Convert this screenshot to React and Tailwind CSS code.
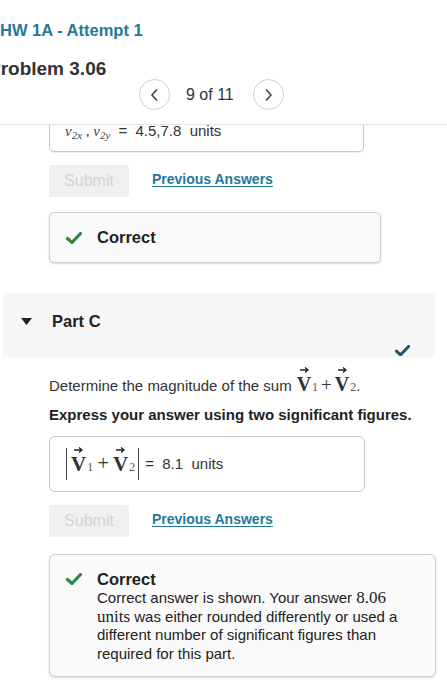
import React from "react";

const sans = { fontFamily: '"Liberation Sans", Arial, sans-serif' };
const serif = { fontFamily: '"Liberation Serif", "DejaVu Serif", serif' };

function Vec({ sub, size = "text-[20px]" }) {
  return (
    <span className="inline-flex items-baseline" style={serif}>
      <span className={`relative font-bold ${size} leading-none`}>
        V
        <svg className="absolute left-[3px] -top-[7px]" width="9" height="6" viewBox="0 0 9 6">
          <path d="M0 3 H7.5 M5 0.6 L8 3 L5 5.4" stroke="#222" strokeWidth="1.3" fill="none" />
        </svg>
      </span>
      <span className="text-[12px] leading-none ml-[1px] text-[#555]">{sub}</span>
    </span>
  );
}

function Check({ color = "#2c8a43", w = 16 }) {
  return (
    <svg width={w} height={w * 0.75} viewBox="0 0 16 12">
      <path d="M1.5 6.5 L6 10.5 L14.5 1.5" stroke={color} strokeWidth="3.2" fill="none" strokeLinecap="round" strokeLinejoin="round" />
    </svg>
  );
}

function SubmitRow() {
  return (
    <div className="flex items-center gap-[23px]">
      <div className="w-[80px] h-[32px] bg-[#f0f0f0] rounded-[2px] flex items-center justify-center text-[16px] text-[#d4d4d4]">
        Submit
      </div>
      <a className="text-[14px] font-bold text-[#23799a] underline underline-offset-2 -mt-[3px]">Previous Answers</a>
    </div>
  );
}

export default function App() {
  return (
    <div className="w-[447px] h-[700px] bg-white overflow-hidden text-[#333]" style={sans}>
      {/* header */}
      <div className="h-[125px] border-b border-[#e4e4e4] flex flex-col">
        <div className="pt-[20px] text-[16.5px] font-bold text-[#23799a] leading-[20px]">HW 1A - Attempt 1</div>
        <div className="mt-[18px] -ml-[12px] text-[19px] font-bold text-[#333] leading-[22px]">Problem 3.06</div>
        <div className="mt-[-1px] flex items-center pl-[139px]">
          <div className="w-[31px] h-[31px] rounded-full border border-[#d0d0d0] flex items-center justify-center">
            <svg width="9" height="14" viewBox="0 0 9 14"><path d="M7 1.5 L2 7 L7 12.5" stroke="#444" strokeWidth="1.6" fill="none" /></svg>
          </div>
          <div className="ml-[16px] mr-[19px] text-[16px] text-[#333]">9 of 11</div>
          <div className="w-[31px] h-[31px] rounded-full border border-[#d0d0d0] flex items-center justify-center">
            <svg width="9" height="14" viewBox="0 0 9 14"><path d="M2 1.5 L7 7 L2 12.5" stroke="#444" strokeWidth="1.6" fill="none" /></svg>
          </div>
        </div>
      </div>

      {/* previous answer box, scrolled under the header */}
      <div className="pl-[49px]">
        <div className="h-[28px] overflow-hidden">
          <div className="-mt-[15px] w-[315px] h-[42px] border border-[#c8c8c8] rounded-[5px] shadow-[0_1px_1px_rgba(0,0,0,0.08)] flex items-center pl-[15px] text-[15px]">
            <span className="italic text-[#444]" style={serif}>
              v<sub className="text-[11px]">2x</sub> , v<sub className="text-[11px]">2y</sub>
            </span>
            <span className="ml-[8px]">=&nbsp; 4.5,7.8 &nbsp;units</span>
          </div>
        </div>

        <div className="mt-[12px]">
          <SubmitRow />
        </div>

        <div className="mt-[15px] w-[332px] h-[51px] border border-[#cfcfcf] rounded-[5px] bg-[#fafafa] shadow-[0_1px_2px_rgba(0,0,0,0.15)] flex items-center pl-[16px]">
          <Check />
          <span className="ml-[15px] text-[16.5px] font-bold text-[#222]">Correct</span>
        </div>
      </div>

      {/* Part C */}
      <div className="mt-[30px] ml-[3px] w-[432px] h-[64px] bg-[#f7f7f7] relative">
        <div className="flex items-center pt-[16px]">
          <svg className="ml-[18px]" width="11" height="7" viewBox="0 0 11 7"><path d="M0 0 H11 L5.5 7 Z" fill="#222" /></svg>
          <span className="ml-[20px] text-[16.5px] font-bold text-[#222]">Part C</span>
        </div>
        <div className="absolute left-[392px] top-[52px]">
          <Check color="#1d5566" w={15} />
        </div>
      </div>

      <div className="pl-[49px]">
        <div className="mt-[14px] flex items-baseline text-[15px] text-[#333]">
          <span>Determine the magnitude of the sum</span>
          <span className="ml-[5px] inline-flex items-baseline">
            <Vec sub="1" />
            <span className="mx-[3px] text-[19px]" style={serif}>+</span>
            <Vec sub="2" />
            <span>.</span>
          </span>
        </div>
        <div className="mt-[4px] text-[15px] font-bold text-[#222]">Express your answer using two significant figures.</div>

        <div className="mt-[10px] w-[316px] h-[56px] border border-[#c8c8c8] rounded-[6px] flex items-center pl-[16px]">
          <span className="w-px h-[32px] bg-[#444] mr-[4px]"></span>
          <Vec sub="1" size="text-[21px]" />
          <span className="mx-[4px] text-[21px]" style={serif}>+</span>
          <Vec sub="2" size="text-[21px]" />
          <span className="w-px h-[32px] bg-[#444] ml-[3px]"></span>
          <span className="ml-[6px] text-[15px]">=&nbsp; 8.1 &nbsp;units</span>
        </div>

        <div className="mt-[13px]">
          <SubmitRow />
        </div>

        <div className="mt-[17px] w-[387px] h-[123px] border border-[#cfcfcf] rounded-[6px] bg-[#fafafa] shadow-[0_1px_2px_rgba(0,0,0,0.15)] flex pl-[16px] pt-[14px]">
          <div className="pt-[4px]"><Check /></div>
          <div className="ml-[15px] text-[15px] leading-[18.5px] text-[#222]">
            <div className="text-[16.5px] font-bold leading-[20px]">Correct</div>
            <div>
              Correct answer is shown. Your answer{" "}
              <span className="text-[17px]" style={serif}>8.06</span>
              <br />
              <span className="text-[17px]" style={serif}>units</span> was either rounded differently or used a
              <br />
              different number of significant figures than
              <br />
              required for this part.
            </div>
          </div>
        </div>
      </div>
    </div>
  );
}
